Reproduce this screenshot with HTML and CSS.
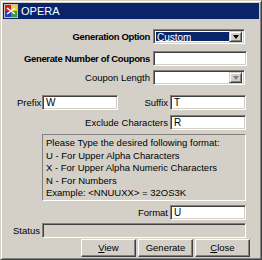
FILE: index.html
```html
<!DOCTYPE html>
<html>
<head>
<meta charset="utf-8">
<link rel="stylesheet" href="styles.css">
</head>
<body>
<div class="window">
  <div class="titlebar">
    <svg class="appicon" width="14" height="14" viewBox="0 0 14 14">
      <rect x="0" y="0" width="14" height="14" fill="#c0c0c0"/>
      <rect x="1" y="1" width="6" height="6" fill="#d02020"/>
      <rect x="7" y="1" width="6" height="6" fill="#f0d020"/>
      <rect x="1" y="7" width="6" height="6" fill="#2040c0"/>
      <rect x="7" y="7" width="6" height="6" fill="#30a030"/>
      <path d="M3 4 L11 10 M11 4 L3 10" stroke="#ffffff" stroke-width="1.5"/>
    </svg>
    <span class="title">OPERA</span>
  </div>
  <div class="content">
    <div class="row r1">
      <span class="label wide bold">Generation Option</span>
      <div class="select focused">
        <span class="sel-text">Custom</span>
        <span class="drop"><span class="tri"></span></span>
      </div>
    </div>
    <div class="row r2">
      <span class="label wide bold">Generate Number of Coupons</span>
      <div class="input w94"></div>
    </div>
    <div class="row r3">
      <span class="label wide">Coupon Length</span>
      <div class="select">
        <span class="sel-text"></span>
        <span class="drop"><span class="tri dis"></span></span>
      </div>
    </div>
    <div class="row r4">
      <span class="label prefix">Prefix</span>
      <div class="input w76">W</div>
      <span class="label suffix">Suffix</span>
      <div class="input w76">T</div>
    </div>
    <div class="row r5">
      <span class="label mid">Exclude Characters</span>
      <div class="input w76">R</div>
    </div>
    <div class="row r6">
      <div class="infobox">
        <div>Please Type the desired following format:</div>
        <div>U - For Upper Alpha Characters</div>
        <div>X - For Upper Alpha Numeric Characters</div>
        <div>N - For Numbers</div>
        <div>Example: &lt;NNUUXX&gt; = 32OS3K</div>
      </div>
    </div>
    <div class="row r7">
      <span class="label mid">Format</span>
      <div class="input w76">U</div>
    </div>
    <div class="row r8">
      <span class="label status">Status</span>
      <div class="input w204 disabled"></div>
    </div>
    <div class="row r9">
      <button class="btn"><u>V</u>iew</button>
      <button class="btn">Generate</button>
      <button class="btn"><u>C</u>lose</button>
    </div>
  </div>
</div>
</body>
</html>
```

FILE: styles.css
```css
* { box-sizing: border-box; }
html, body { margin: 0; padding: 0; background: #d4d0c8; }
body { font-family: "Liberation Sans", Arial, sans-serif; font-size: 9.5px; color: #000; }

.window {
  width: 262px;
  height: 260px;
  background: #d4d0c8;
  border: 1px solid;
  border-color: #d4d0c8 #404040 #404040 #d4d0c8;
  box-shadow: inset 1px 1px #ffffff, inset -1px -1px #808080;
  padding: 2px;
  display: flex;
  flex-direction: column;
}

.titlebar {
  height: 16px;
  flex-shrink: 0;
  background: #0a246a;
  display: flex;
  align-items: center;
  padding-left: 1px;
  gap: 3px;
}
.appicon { display: block; }
.title {
  color: #fff;
  font-size: 11px;
  font-family: "Liberation Sans", Arial, sans-serif;
}

.content {
  display: flex;
  flex-direction: column;
}

.row {
  display: flex;
  align-items: center;
  height: 15px;
  flex-shrink: 0;
}
.r1 { margin-top: 10px; }
.r2 { margin-top: 7px; }
.r3 { margin-top: 4px; }
.r4 { margin-top: 10px; }
.r5 { margin-top: 5px; }
.r6 { margin-top: 4px; height: auto; padding-left: 39px; }
.r7 { margin-top: 4px; }
.r8 { margin-top: 3px; }
.r9 { margin-top: 1px; height: 18px; padding-left: 78px; gap: 2px; }

.label { white-space: nowrap; }
.bold { font-weight: bold; font-size: 9.5px; letter-spacing: -0.35px; }
.wide { width: 150px; text-align: right; padding-right: 3px; }
.mid { width: 167px; text-align: right; padding-right: 2px; }
.prefix { width: 39px; padding-left: 14px; }
.suffix { width: 52px; text-align: right; padding-right: 2px; }
.status { width: 39px; padding-left: 10px; }

.input {
  height: 15px;
  background: #fff;
  border: 1px solid;
  border-color: #808080 #ffffff #ffffff #808080;
  box-shadow: inset 1px 1px #404040, inset -1px -1px #d4d0c8;
  padding: 1px 3px 0 3px;
  font-size: 10px;
  line-height: 12px;
}
.input.disabled { background: #d4d0c8; }
.w94 { width: 94px; }
.w76 { width: 76px; }
.w204 { width: 204px; }

.select {
  width: 92px;
  height: 15px;
  background: #fff;
  border: 1px solid;
  border-color: #808080 #ffffff #ffffff #808080;
  box-shadow: inset 1px 1px #404040, inset -1px -1px #d4d0c8;
  padding: 2px;
  display: flex;
}
.sel-text {
  flex: 1;
  font-size: 10px;
  line-height: 11px;
  padding-left: 1px;
}
.select.focused .sel-text { background: #0a246a; color: #fff; }
.drop {
  width: 13px;
  height: 11px;
  margin-top: -1px;
  background: #d4d0c8;
  border: 1px solid;
  border-color: #d4d0c8 #404040 #404040 #d4d0c8;
  box-shadow: inset 1px 1px #fff, inset -1px -1px #808080;
  display: flex;
  align-items: center;
  justify-content: center;
}
.tri {
  width: 0; height: 0;
  border-left: 3.5px solid transparent;
  border-right: 3.5px solid transparent;
  border-top: 4px solid #000;
}
.tri.dis { border-top-color: #808080; }

.infobox {
  width: 204px;
  border: 1px solid;
  border-color: #808080 #ffffff #ffffff #808080;
  padding: 2px 2px 0 3px;
  line-height: 12.5px;
  font-size: 9.5px;
}

.btn {
  width: 55px;
  height: 18px;
  background: #d4d0c8;
  border: 1px solid;
  border-color: #ffffff #404040 #404040 #ffffff;
  box-shadow: inset -1px -1px #808080;
  font-family: "Liberation Sans", Arial, sans-serif;
  font-size: 9.5px;
  color: #000;
  padding: 0;
}
```
